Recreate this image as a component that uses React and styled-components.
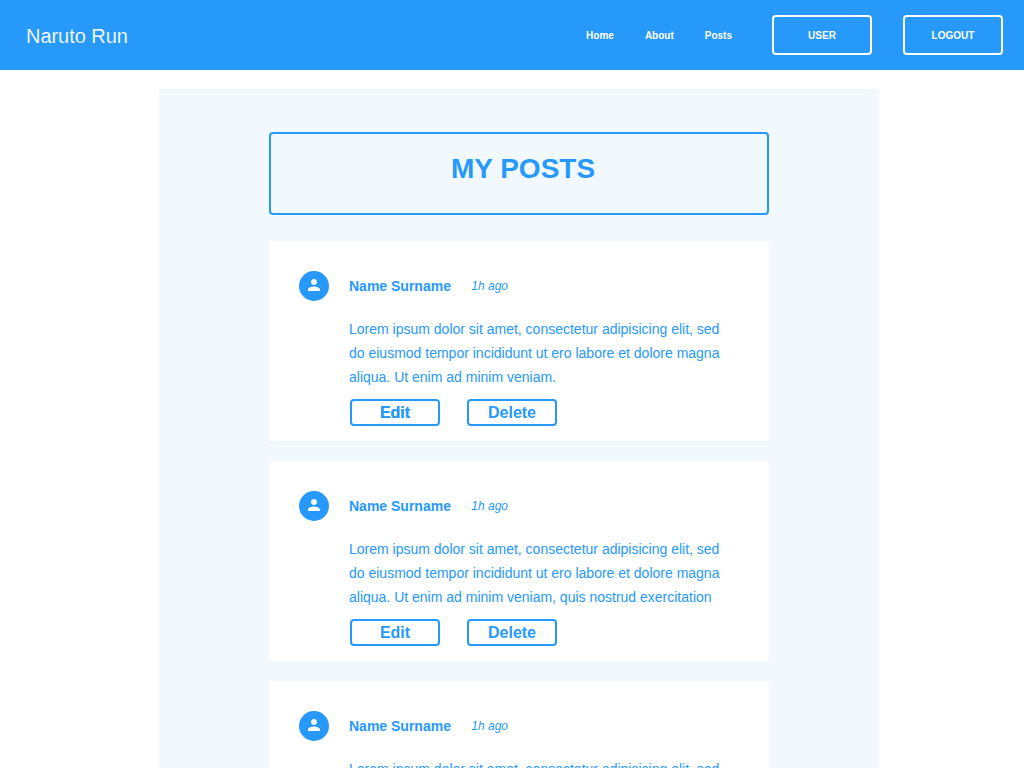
import React from "react";
import styled, { createGlobalStyle } from "styled-components";

const BLUE = "#2699fb";
const PALE = "#f1f9ff";

const GlobalStyle = createGlobalStyle`
  *, *::before, *::after { box-sizing: border-box; }
  html, body { margin: 0; height: 100%; overflow: hidden; }
  body {
    background: #fff;
    color: ${BLUE};
    font-family: "Liberation Sans", Arial, Helvetica, sans-serif;
  }
`;

const Page = styled.div`
  height: 100vh;
  overflow: hidden;
`;

const Header = styled.header`
  display: flex;
  align-items: center;
  justify-content: space-between;
  height: 70px;
  padding: 0 21px 0 26px;
  background: ${BLUE};
  color: #fff;
`;

const Brand = styled.div`
  font-size: 20px;
  line-height: 24px;
  letter-spacing: -0.05px;
  padding-top: 2px;
  -webkit-text-stroke: 0.15px ${BLUE};
`;

const Nav = styled.nav`
  display: flex;
  align-items: center;
`;

const NavLink = styled.a`
  margin-right: 31px;
  font-size: 10px;
  font-weight: 700;
  line-height: 12px;
  padding-top: 1px;
`;

const NavButton = styled.button`
  width: 100px;
  height: 40px;
  margin: 0 0 0 ${(p) => p.$gap}px;
  padding: 1px 0 0;
  border: 2px solid #fff;
  border-radius: 4px;
  background: transparent;
  color: #fff;
  font: 700 10px/12px "Liberation Sans", Arial, sans-serif;
`;

const Feed = styled.main`
  display: flex;
  flex-direction: column;
  align-items: center;
  width: 720px;
  height: 900px;
  margin: 19px 0 0 159px;
  padding-top: 43px;
  background: ${PALE};
`;

const TitleBox = styled.div`
  flex: none;
  width: 500px;
  height: 83px;
  margin-bottom: 26px;
  padding: 19px 0 0 8px;
  border: 2px solid ${BLUE};
  border-radius: 4px;
`;

const Title = styled.h1`
  margin: 0;
  font-size: 28px;
  line-height: 32px;
  text-align: center;
`;

const Card = styled.article`
  display: flex;
  flex: none;
  gap: 20px;
  width: 500px;
  height: 200px;
  margin-bottom: 20px;
  padding: 30px 30px 0;
  background: #fff;
`;

const Avatar = styled.div`
  display: flex;
  flex: none;
  align-items: center;
  justify-content: center;
  width: 30px;
  height: 30px;
  padding-bottom: 2px;
  border-radius: 50%;
  background: ${BLUE};
`;

const Content = styled.div`
  flex: 1;
`;

const Byline = styled.div`
  display: flex;
  align-items: center;
  gap: 20.4px;
  height: 30px;
`;

const Author = styled.span`
  font-size: 14px;
  font-weight: 700;
  line-height: 16px;
`;

const Time = styled.span`
  font-size: 12px;
  font-style: italic;
  line-height: 14px;
`;

const Body = styled.p`
  height: 72px;
  margin: 16px 0 10px;
  font-size: 14px;
  line-height: 24px;
  white-space: nowrap;
`;

const Actions = styled.div`
  display: flex;
  gap: 27px;
  padding-left: 1px;
`;

const ActionButton = styled.button`
  width: 90px;
  height: 27px;
  padding: 0;
  border: 2px solid ${BLUE};
  border-radius: 4px;
  background: #fff;
  color: ${BLUE};
  font: 700 16px/18px "Liberation Sans", Arial, sans-serif;
  text-shadow: ${(p) => (p.$strong ? `0 0 0 ${BLUE}` : "none")};
`;

const INTRO = [
  "Lorem ipsum dolor sit amet, consectetur adipisicing elit, sed",
  "do eiusmod tempor incididunt ut ero labore et dolore magna",
];

const POSTS = [
  "aliqua. Ut enim ad minim veniam.",
  "aliqua. Ut enim ad minim veniam, quis nostrud exercitation",
  "aliqua. Ut enim ad minim veniam.",
];

function PersonIcon() {
  return (
    <svg width="18" height="18" viewBox="0 0 24 24" fill="#fff" aria-hidden="true">
      <path d="M12 12c2.21 0 4-1.79 4-4s-1.79-4-4-4-4 1.79-4 4 1.79 4 4 4zm0 2c-2.67 0-8 1.34-8 4v2h16v-2c0-2.66-5.33-4-8-4z" />
    </svg>
  );
}

function Post({ ending, strongEdit }) {
  return (
    <Card>
      <Avatar>
        <PersonIcon />
      </Avatar>
      <Content>
        <Byline>
          <Author>Name Surname</Author>
          <Time>1h ago</Time>
        </Byline>
        <Body>
          {INTRO[0]}
          <br />
          {INTRO[1]}
          <br />
          {ending}
        </Body>
        <Actions>
          <ActionButton $strong={strongEdit}>Edit</ActionButton>
          <ActionButton>Delete</ActionButton>
        </Actions>
      </Content>
    </Card>
  );
}

export default function App() {
  return (
    <Page>
      <GlobalStyle />
      <Header>
        <Brand>Naruto Run</Brand>
        <Nav>
          <NavLink>Home</NavLink>
          <NavLink>About</NavLink>
          <NavLink>Posts</NavLink>
          <NavButton $gap={9}>USER</NavButton>
          <NavButton $gap={31}>LOGOUT</NavButton>
        </Nav>
      </Header>
      <Feed>
        <TitleBox>
          <Title>MY POSTS</Title>
        </TitleBox>
        {POSTS.map((ending, i) => (
          <Post key={i} ending={ending} strongEdit={i === 0} />
        ))}
      </Feed>
    </Page>
  );
}
